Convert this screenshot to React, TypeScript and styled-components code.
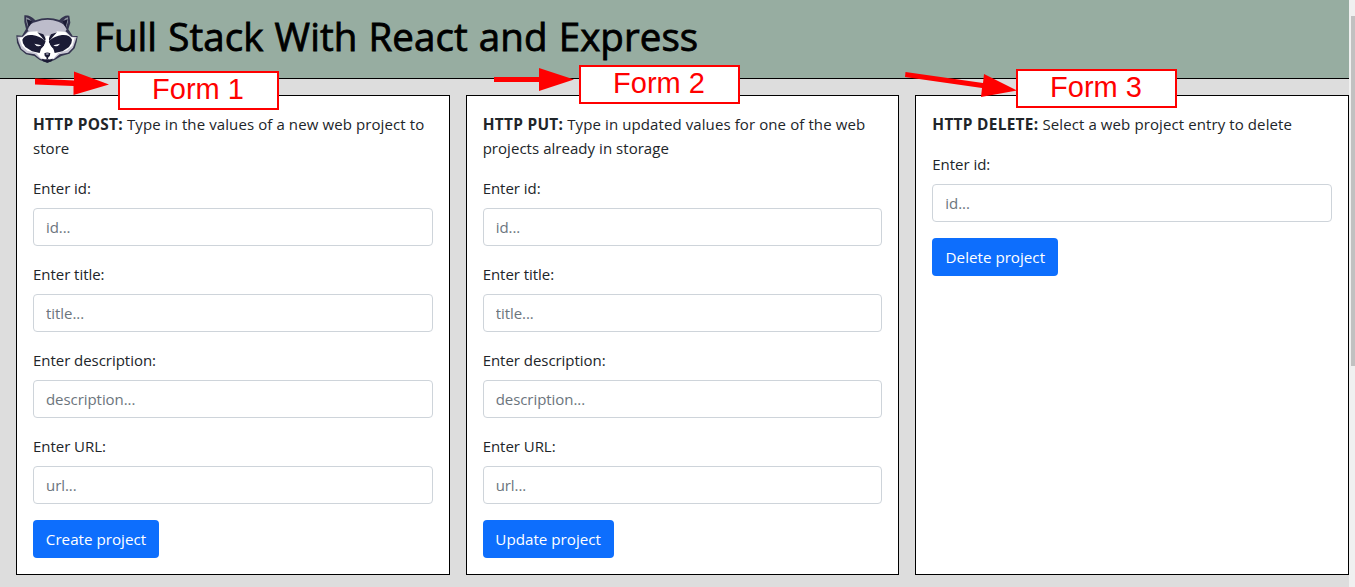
import React from "react";
import styled, { createGlobalStyle } from "styled-components";

const GlobalStyle = createGlobalStyle`
  *, *::before, *::after { box-sizing: border-box; }
  body {
    margin: 0;
    overflow: hidden;
    background: #ddd;
    color: #212529;
    font: 400 16px/24px "Open Sans", "Noto Sans", sans-serif;
  }
`;

const Window = styled.div`
  position: relative;
  display: flex;
  height: 587px;
`;

const Page = styled.div`
  flex: 1;
  min-width: 0;
`;

const Header = styled.header`
  display: flex;
  align-items: center;
  gap: 15px;
  height: 79px;
  padding: 0 15px 1px;
  background: #97ada1;
  border-bottom: 1px solid #000;
`;

const Title = styled.h1`
  margin: 0;
  padding-bottom: 5px;
  color: #000;
  font-size: 38.5px;
  font-weight: 400;
  line-height: 48px;
  letter-spacing: 0.05px;
  word-spacing: 1.1px;
  white-space: nowrap;
  -webkit-text-stroke: 0.8px #000;
`;

const Forms = styled.main`
  display: grid;
  grid-template-columns: repeat(3, 1fr);
  gap: 16px;
  height: 496px;
  padding: 16px 0 0 16px;
`;

const Card = styled.form`
  padding: 16px;
  background: #fff;
  border: 1px solid #000;
`;

const Intro = styled.p`
  margin: 0 0 16px;
`;

const Line = styled.span<{ $track?: number }>`
  display: block;
  height: 24px;
  white-space: nowrap;
  font-size: 15px;
  letter-spacing: ${(p) => p.$track ?? 0}px;
`;

const Method = styled.b`
  font-size: 15.4px;
  letter-spacing: 0.3px;
`;

const Field = styled.div`
  margin-bottom: 16px;
`;

const Label = styled.label`
  display: block;
  margin-bottom: 8px;
  font-size: 15px;
  letter-spacing: -0.04px;
`;

const Input = styled.input`
  display: block;
  width: 100%;
  height: 38px;
  padding: 6px 12px;
  border: 1px solid #ced4da;
  border-radius: 4px;
  background: #fff;
  font: inherit;
  font-size: 15px;
  letter-spacing: -0.06px;
  &::placeholder { color: #6c757d; opacity: 1; }
`;

const Button = styled.button<{ $width: number }>`
  display: block;
  width: ${(p) => p.$width}px;
  height: 38px;
  padding: 0;
  border: 0;
  border-radius: 4px;
  background: #0d6efd;
  color: #fff;
  font: inherit;
  font-size: 15.2px;
  white-space: nowrap;
`;

const Scrollbar = styled.div`
  width: 6px;
  padding: 16px 0 0 2px;
  background: #f0f0f0;
`;

const Thumb = styled.div`
  height: 350px;
  background: #c1c1c1;
`;

const Tag = styled.div<{ $x: number; $y: number }>`
  position: absolute;
  left: ${(p) => p.$x}px;
  top: ${(p) => p.$y}px;
  width: 161px;
  height: 39px;
  border: 2px solid #f00;
  background: #fff;
  color: #f00;
  font: 29px/33px "Liberation Sans", Arial, sans-serif;
  text-align: center;
  padding-right: 1px;
`;

const Arrows = styled.svg`
  position: absolute;
  left: 0;
  top: 0;
  pointer-events: none;
`;

const Logo = () => (
  <svg width="64" height="50" viewBox="45 42 192 150" aria-hidden="true">
    <path d="M73 46Q90 44 106 61Q142 48 178 60Q193 43 208 47L211 68L205 88L218 108L233 108L230 125L224 145L208 161L184 168L164 180L142 188L119 180L103 168L78 163L60 148L51 128L49 106L66 107L78 87L73 66Z" fill="#34344f" />
    <path d="M78 52Q86 53 94 62L84 80Q77 68 78 52ZM204 52Q196 53 190 62L199 80Q206 68 204 52Z" fill="#8e93a0" />
    <path d="M80 58L96 63L87 86ZM203 58L188 63L196 86Z" fill="#1b1b35" />
    <path d="M83 90Q90 68 108 66Q142 53 175 65Q193 70 200 89L191 99L174 94L142 112L109 94L92 99Z" fill="#bdbccb" />
    <path d="M52 110L68 110L84 94L111 94L132 104L142 115L152 104L172 94L197 94L214 110L230 111L225 127L219 143L204 158L179 163L163 176L142 184L120 176L104 163L80 159L64 146L56 127Z" fill="#c8c7d4" />
    <path d="M58 113L69 112L86 96L111 94L134 108L142 122L150 108L172 94L196 96L213 112L224 113L217 137L201 151L175 159L160 176L124 176L109 159L82 152L66 137Z" fill="#fff" />
    <path d="M67 119Q73 103 97 105Q119 107 137 124L132 137L123 146L119 159L96 154L76 141L69 130ZM216 119Q210 103 186 105Q164 107 146 124L151 137L160 146L164 159L188 154L207 141L214 130Z" fill="#1b1b35" />
    <path d="M112 97L130 103L138 117L135 123L123 109ZM171 97L153 103L145 117L148 123L160 109Z" fill="#1b1b35" />
    <path d="M103 131L124 136Q112 144 103 131ZM180 131L160 136Q171 144 180 131Z" fill="#f3f3f8" />
    <path d="M136 107H148L146 127L160 151L162 169L142 181L122 169L124 151L138 127Z" fill="#fff" />
    <path d="M133 160Q142 155 151 160Q151 169 145 172L144 176L149 179H135L140 176L139 172Q132 169 133 160Z" fill="#1b1b35" />
    <path d="M125 176L142 180L159 176L155 184L142 188L129 184Z" fill="#1b1b35" />
    <ellipse cx="142" cy="162" rx="5" ry="2" fill="#aaaabd" />
  </svg>
);

type FieldSpec = { name: string; hint: string };

const idField: FieldSpec = { name: "id", hint: "id..." };
const allFields: FieldSpec[] = [
  idField,
  { name: "title", hint: "title..." },
  { name: "description", hint: "description..." },
  { name: "URL", hint: "url..." },
];

type ProjectFormProps = {
  method: string;
  first: string;
  second?: string;
  fields: FieldSpec[];
  action: string;
  buttonWidth: number;
};

const ProjectForm = ({ method, first, second, fields, action, buttonWidth }: ProjectFormProps) => (
  <Card>
    <Intro>
      <Line $track={0.1}><Method>{method}</Method> {first}</Line>
      {second && <Line $track={0.04}>{second}</Line>}
    </Intro>
    {fields.map((f) => (
      <Field key={f.name}>
        <Label>Enter {f.name}:</Label>
        <Input placeholder={f.hint} />
      </Field>
    ))}
    <Button type="button" $width={buttonWidth}>{action}</Button>
  </Card>
);

export default function App() {
  return (
    <>
      <GlobalStyle />
      <Window>
        <Page>
          <Header>
            <Logo />
            <Title>Full Stack With React and Express</Title>
          </Header>
          <Forms>
            <ProjectForm method="HTTP POST:" first="Type in the values of a new web project to" second="store" fields={allFields} action="Create project" buttonWidth={126} />
            <ProjectForm method="HTTP PUT:" first="Type in updated values for one of the web" second="projects already in storage" fields={allFields} action="Update project" buttonWidth={131} />
            <ProjectForm method="HTTP DELETE:" first="Select a web project entry to delete" fields={[idField]} action="Delete project" buttonWidth={126} />
          </Forms>
        </Page>
        <Scrollbar><Thumb /></Scrollbar>
        <Arrows width="1355" height="120" fill="#f00">
          <path d="M35 78.5L74 80.5V71.5L109 84.5L73.5 95V86L35 84.5Z" />
          <path d="M494 77H539V68L574 79.5L539 91V82H494Z" />
          <path d="M905.5 72L983 83L984 74L1017 90.5L981 97L982 88L905 77Z" />
        </Arrows>
        <Tag $x={118} $y={71}>Form 1</Tag>
        <Tag $x={579} $y={65}>Form 2</Tag>
        <Tag $x={1016} $y={69}>Form 3</Tag>
      </Window>
    </>
  );
}
